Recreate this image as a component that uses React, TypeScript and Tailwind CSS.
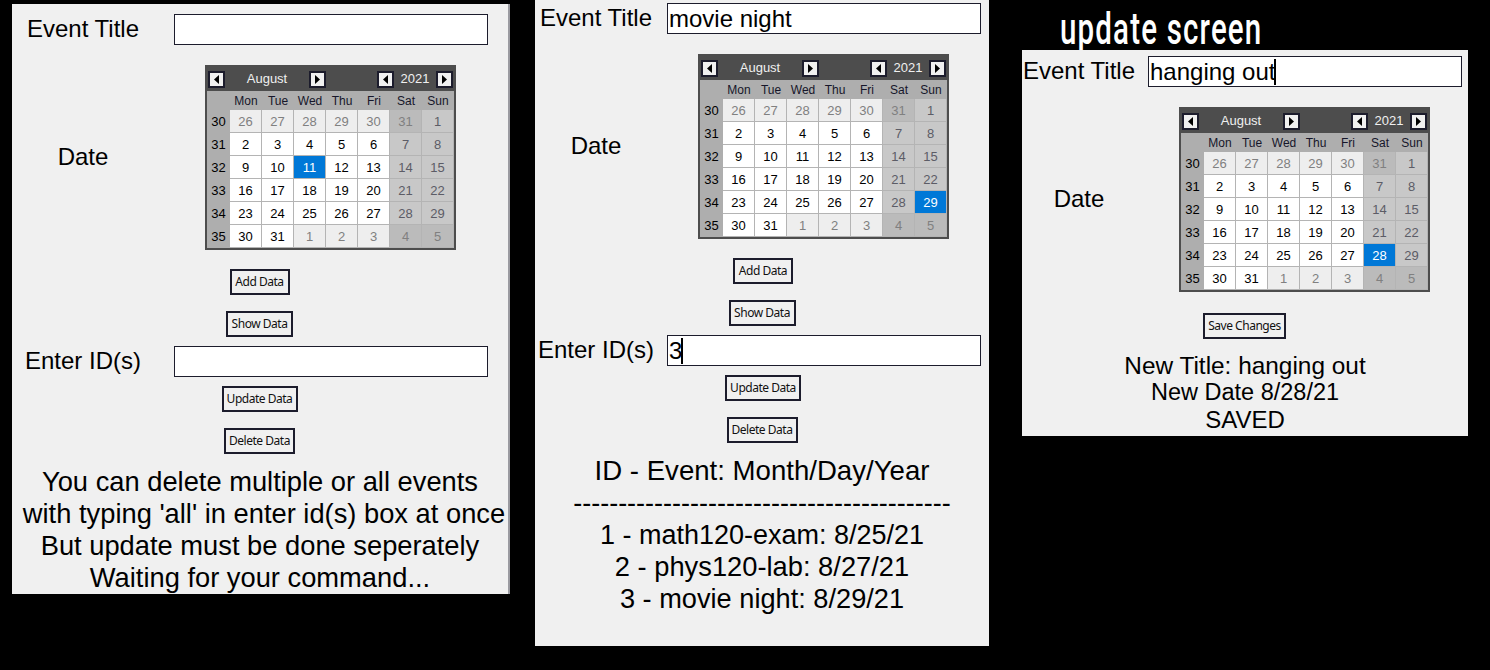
import React from "react";

const weeks = [30, 31, 32, 33, 34, 35];
const dayNames = ["Mon", "Tue", "Wed", "Thu", "Fri", "Sat", "Sun"];
// first and last rows spill into the neighbouring months
const days = [
  26, 27, 28, 29, 30, 31, 1, 2, 3, 4, 5, 6, 7, 8, 9, 10, 11, 12, 13, 14, 15, 16, 17, 18, 19, 20, 21, 22, 23, 24, 25, 26,
  27, 28, 29, 30, 31, 1, 2, 3, 4, 5,
];

function isOutside(i: number) {
  return i < 6 || i >= 37;
}

function dayCellClass(i: number, selected: number) {
  const day = days[i];
  const outside = isOutside(i);
  const weekend = i % 7 >= 5;
  if (!outside && day === selected) return "bg-[#0078d7] text-white";
  if (outside && weekend) return "bg-[#bbbbbb] text-[#808080]";
  if (outside) return "bg-[#eeeeee] text-[#808080]";
  if (weekend) return "bg-[#c8c8c8] text-[#5c5c66]";
  return "bg-white text-black";
}

function ArrowButton({ dir }: { dir: "left" | "right" }) {
  return (
    <div className="flex h-[17px] w-[17px] items-center justify-center border-2 border-[#1c1c2c] bg-[#f0f0f0]">
      <svg width="5" height="9" viewBox="0 0 5 9">
        <path d={dir === "left" ? "M5 0 L0 4.5 L5 9 Z" : "M0 0 L5 4.5 L0 9 Z"} fill="#000" />
      </svg>
    </div>
  );
}

function Calendar({ selected }: { selected: number }) {
  return (
    <div className="w-[251px] border-2 border-[#4d4d4d] font-['Liberation_Sans',sans-serif] text-[13px]">
      {/* Month and year */}
      <div className="flex h-6 items-center bg-[#4d4d4d] pl-[1px] text-[#f0f0f0]">
        <div className="flex w-[118px] items-center justify-between">
          <ArrowButton dir="left" />
          <span className="pb-[1px]">August</span>
          <ArrowButton dir="right" />
        </div>
        <div className="ml-[51px] flex w-[76px] items-center justify-between">
          <ArrowButton dir="left" />
          <span className="pb-[1px]">2021</span>
          <ArrowButton dir="right" />
        </div>
      </div>

      <div className="grid grid-cols-[23px_repeat(7,32px)] grid-rows-[19px_repeat(6,23px)] bg-[#aeaeae]">
        <div />
        {dayNames.map((name) => (
          <div key={name} className="flex items-center justify-center text-xs text-[#16162a]">
            {name}
          </div>
        ))}
        {weeks.map((week, row) => (
          <React.Fragment key={week}>
            <div className="flex items-center justify-center pt-[1px] text-black">{week}</div>
            {days.slice(row * 7, row * 7 + 7).map((day, col) => (
              <div
                key={col}
                className={`flex items-center justify-center border-r border-b border-[#b4b4b4] pt-[1px] ${dayCellClass(
                  row * 7 + col,
                  selected,
                )}`}
              >
                {day}
              </div>
            ))}
          </React.Fragment>
        ))}
      </div>
    </div>
  );
}

function CommandButton({ label, className }: { label: string; className: string }) {
  return (
    <button
      className={`flex h-[26px] items-center justify-center border-2 border-[#1c1c2c] bg-[#f0f0f0] font-['Noto_Sans',sans-serif] text-xs tracking-[-0.04em] text-[#111] ${className}`}
    >
      {label}
    </button>
  );
}

function TextBox({ value, caret }: { value?: string; caret?: boolean }) {
  return (
    <div className="flex h-[31px] w-[314px] items-center border border-[#1c1c2c] bg-white pl-[1px] text-2xl leading-none text-black">
      {value}
      {caret && <span className="-ml-[1px] inline-block h-[26px] w-[2px] bg-black" />}
    </div>
  );
}

function FormRow({
  label,
  value,
  caret,
  columnClass,
}: {
  label: string;
  value?: string;
  caret?: boolean;
  columnClass: string;
}) {
  return (
    <div className={`grid items-center ${columnClass}`}>
      <span className="pb-[2px] text-center text-2xl leading-none">{label}</span>
      <TextBox value={value} caret={caret} />
    </div>
  );
}

function DateRow({ selected, columnClass }: { selected: number; columnClass: string }) {
  return (
    <div className={`mt-5 grid items-center ${columnClass}`}>
      <span className="pb-[2px] text-center text-2xl leading-none">Date</span>
      <div className="ml-[31px]">
        <Calendar selected={selected} />
      </div>
    </div>
  );
}

export default function App() {
  return (
    <div className="relative h-[670px] w-[1490px] overflow-hidden bg-black font-['Liberation_Sans',sans-serif] text-black">
      {/* Main window, idle */}
      <div className="absolute top-[4px] left-[12px] flex h-[590px] w-[498px] flex-col border-r-2 border-[#9a9aa0] bg-[#f0f0f0] pt-[10px]">
        <FormRow label="Event Title" columnClass="grid-cols-[142px_314px] gap-x-5" />
        <DateRow selected={11} columnClass="grid-cols-[142px_314px] gap-x-5" />
        <div className="flex flex-col items-center pr-[1px]">
          <CommandButton label="Add Data" className="mt-[19px] w-[60px]" />
          <CommandButton label="Show Data" className="mt-4 w-[67px]" />
        </div>
        <div className="mt-[9px]">
          <FormRow label="Enter ID(s)" columnClass="grid-cols-[142px_314px] gap-x-5" />
        </div>
        <div className="flex flex-col items-center pr-[1px]">
          <CommandButton label="Update Data" className="mt-[9px] w-[76px]" />
          <CommandButton label="Delete Data" className="mt-4 w-[71px]" />
        </div>
        <div className="mt-3 whitespace-nowrap text-center text-[27.3px] leading-8">
          <p>You can delete multiple or all events</p>
          <p className="pl-2">with typing 'all' in enter id(s) box at once</p>
          <p>But update must be done seperately</p>
          <p>Waiting for your command...</p>
        </div>
      </div>

      {/* Main window, listing events */}
      <div className="absolute top-0 left-[535px] flex h-[646px] w-[454px] flex-col bg-[#f0f0f0] pt-[3px]">
        <FormRow label="Event Title" value="movie night" columnClass="grid-cols-[122px_314px] gap-x-2.5" />
        <DateRow selected={29} columnClass="grid-cols-[122px_314px] gap-x-2.5" />
        <div className="flex flex-col items-center">
          <CommandButton label="Add Data" className="mt-[19px] ml-[2px] w-[60px]" />
          <CommandButton label="Show Data" className="mt-4 w-[67px]" />
        </div>
        <div className="mt-[9px]">
          <FormRow label="Enter ID(s)" value="3" caret columnClass="grid-cols-[122px_314px] gap-x-2.5" />
        </div>
        <div className="flex flex-col items-center">
          <CommandButton label="Update Data" className="mt-[9px] ml-[2px] w-[76px]" />
          <CommandButton label="Delete Data" className="mt-4 w-[71px]" />
        </div>
        <div className="mt-3 whitespace-nowrap text-center text-[27.3px] leading-8">
          <p className="text-[27.6px]">ID - Event: Month/Day/Year</p>
          <p className="text-[27px]">------------------------------------------</p>
          <p className="text-[27px]">1 - math120-exam: 8/25/21</p>
          <p>2 - phys120-lab: 8/27/21</p>
          <p className="text-[27.2px]">3 - movie night: 8/29/21</p>
        </div>
      </div>

      {/* Update window */}
      <span className="absolute top-[10px] left-[1060px] origin-left scale-x-[0.67] font-['Roboto',sans-serif] text-[44px] leading-[38px] font-medium tracking-[0.04em] whitespace-nowrap text-white">
        update screen
      </span>
      <div className="absolute top-[50px] left-[1022px] flex h-[386px] w-[446px] flex-col bg-[#f0f0f0] pt-[6px]">
        <FormRow label="Event Title" value="hanging out" caret columnClass="grid-cols-[114px_314px] gap-x-3" />
        <DateRow selected={28} columnClass="grid-cols-[114px_314px] gap-x-3" />
        <div className="flex flex-col items-center pr-[1px]">
          <CommandButton label="Save Changes" className="mt-[21px] w-[83px]" />
        </div>
        <div className="mt-[13px] text-center text-2xl leading-[27px]">
          <p className="text-[24.4px]">New Title: hanging out</p>
          <p className="text-[23.5px]">New Date 8/28/21</p>
          <p>SAVED</p>
        </div>
      </div>
    </div>
  );
}
